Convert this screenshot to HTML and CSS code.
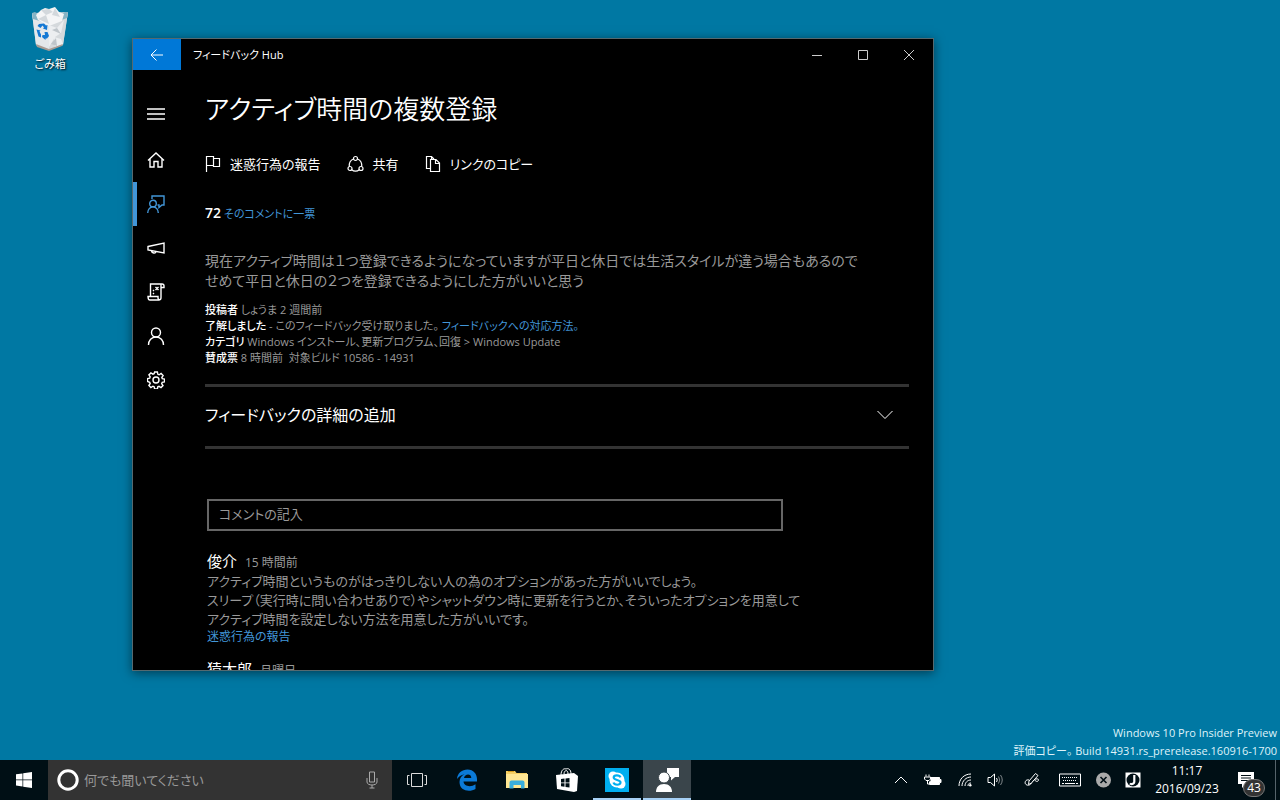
FILE: index.html
```
<!DOCTYPE html>
<html lang="ja">
<head>
    <meta charset="UTF-8">
    <meta name="viewport" content="width=device-width, initial-scale=1.0">
    <title>フィードバック Hub</title>
    <link rel="stylesheet" href="styles.css">
</head>
<body>

<div class="desktop">

    <!-- Desktop icon -->
    <button class="desktop-icon">
        <svg width="40" height="46" viewBox="0 0 40 46">
            <path d="M2 7l36-1-5 33-14 5-13-5z" fill="#c9d3d9"/>
            <path d="M2 7l17 5v32L6 39z" fill="#e4e7ea"/>
            <path d="M19 12l19-6-5 33-14 5z" fill="#d5d9dc"/>
            <path d="M2 7l3-1 6 5 8 2 10-3 6-4 3 0-1 6-17 6L3 13z" fill="#86b4c5"/>
            <path d="M6 9l5-5 4-2 4 1 6-2 4 5 5 2-2 7-13 5L8 14z" fill="#f4f5f6"/>
            <path d="M11 4l5 5 7-3-4-3zM25 2l-3 7 8 2zM8 13l8-4 3 9z" fill="#d3d8dc"/>
            <path d="M19 19l8 3 7-8-3 13-6 4-6 10zM24 31l7 2 2 5-8 3z" fill="#eceef0"/>
            <path d="M22 24l5-2 4 6zM21 38l5-6 1 8z" fill="#bfc5ca"/>
            <path d="M6 38l13 5 14-5-1 2-13 5-12-4z" fill="#a99b93"/>
            <path d="M9 18l5-.5 2 2 1.500-.5-.5 5-4-1.500 1-1-1.500-2-2 2.500-3-2zM6.500 23.500l4 1-1 1 1.500 3 0 3-2.500-1zM12.500 29l2.500 0-.500-3 3 0 1.500 4-2 2.500h-1.500v1.500l-3.500-3z" fill="#1478d4"/>
        </svg>
        <span>ごみ箱</span>
    </button>

    <!-- Feedback Hub window -->
    <div class="window">
        <header class="titlebar">
            <button class="back" aria-label="戻る">
                <svg width="14" height="12" viewBox="0 0 14 12"><path d="M13 6H1M6.500 .5L1 6l5.500 5.500"/></svg>
            </button>
            <span class="caption">フィードバック Hub</span>
            <button class="control" aria-label="最小化">
                <svg width="12" height="12" viewBox="0 0 12 12"><path d="M1 6.500h10"/></svg>
            </button>
            <button class="control" aria-label="最大化">
                <svg width="12" height="12" viewBox="0 0 12 12"><path d="M1.500 1.500h9v9h-9z"/></svg>
            </button>
            <button class="control" aria-label="閉じる">
                <svg width="12" height="12" viewBox="0 0 12 12"><path d="M1 1l10 10M11 1L1 11"/></svg>
            </button>
        </header>

        <div class="window-body">
            <nav class="sidebar">
                <button class="menu" aria-label="メニュー">
                    <svg width="18" height="18" viewBox="0 0 18 18"><path d="M0 4h18M0 9h18M0 14h18"/></svg>
                </button>
                <a href="#" aria-label="ホーム">
                    <svg width="18" height="18" viewBox="0 0 18 18"><path d="M1 9.500L9 2l8 7.500M3 8v8h4v-5.500h4V16h4V8"/></svg>
                </a>
                <a href="#" class="active" aria-label="フィードバック">
                    <svg width="18" height="18" viewBox="0 0 18 18"><path d="M5 4V1h12v9h-2l-3 2.500V10h-1.500"/><circle cx="6" cy="8.500" r="3.300"/><path d="M.7 18c0-3.500 2.300-6.200 5.300-6.200s5.300 2.700 5.300 6.200"/></svg>
                </a>
                <a href="#" aria-label="お知らせ">
                    <svg width="18" height="18" viewBox="0 0 18 18"><path d="M1 7.500L17 4v10L1 11zM4.500 12c.5 2.500 4 2.700 4.500.8"/></svg>
                </a>
                <a href="#" aria-label="クエスト">
                    <svg width="18" height="18" viewBox="0 0 18 18"><path d="M3.500 13.500V1H15q2 0 2 1.800v1.700h-3M14 1.500v13M14 14.500c0 3-3 3-3 0V13.500H1c0 2 .5 3.500 2 3.500h9.500"/><path d="M8.500 4l3 3M11.500 4l-3 3M6 11l1-1M6 8l1-1"/></svg>
                </a>
                <a href="#" aria-label="プロフィール">
                    <svg width="18" height="18" viewBox="0 0 18 18"><circle cx="9" cy="5.500" r="4.500"/><path d="M1.500 18c0-4.500 3-8 7.500-8s7.500 3.500 7.500 8"/></svg>
                </a>
                <a href="#" aria-label="設定">
                    <svg width="18" height="18" viewBox="0 0 18 18"><circle cx="9" cy="9" r="3"/><path d="M7.600 1h2.800l.5 2.300 1.200.5 2-1.300 2 2-1.300 2 .5 1.200 2.200.4v2.800l-2.300.5-.5 1.200 1.300 2-2 2-2-1.300-1.200.5-.4 2.200H7.600l-.5-2.300-1.200-.5-2 1.300-2-2 1.300-2-.5-1.200L.5 10.400V7.600l2.200-.5.5-1.200-1.300-2 2-2 2 1.300 1.200-.5z"/></svg>
                </a>
            </nav>

            <main class="content">
                <h1>アクティブ時間の複数登録</h1>

                <div class="commands">
                    <button>
                        <svg width="16" height="18" viewBox="0 0 16 18"><path d="M1.500 17V1.500h7v9h-7M8.500 3.500h6v8h-6v-1"/></svg>
                        迷惑行為の報告
                    </button>
                    <button>
                        <svg width="17" height="18" viewBox="0 0 17 18"><circle cx="8.500" cy="3.500" r="2"/><circle cx="3" cy="13.500" r="2"/><circle cx="14" cy="13.500" r="2"/><path d="M6.500 4C3.500 5 2 8 2.300 11.500M10.500 4c3 1 4.500 4 4.200 7.500M4.800 14.800c2 1.800 5.400 1.800 7.400 0"/></svg>
                        共有
                    </button>
                    <button>
                        <svg width="16" height="18" viewBox="0 0 16 18"><path d="M5 13.500H1.500v-12h5L9 4M5.500 4.500H11l3.500 3.500v8.500h-9zM10.500 4.500V8.500h4M6.500 1.500V4"/></svg>
                        リンクのコピー
                    </button>
                </div>

                <p class="votes"><strong>72</strong> <a href="#">そのコメントに一票</a></p>

                <p class="description">現在アクティブ時間は１つ登録できるようになっていますが平日と休日では生活スタイルが違う場合もあるので<br>せめて平日と休日の２つを登録できるようにした方がいいと思う</p>

                <div class="meta">
                    <p><b>投稿者</b> しょうま 2 週間前</p>
                    <p><b>了解しました</b> - このフィードバック受け取りました。 <a href="#">フィードバックへの対応方法。</a></p>
                    <p><b>カテゴリ</b> Windows インストール、更新プログラム、回復 &gt; Windows Update</p>
                    <p><b>賛成票</b> 8 時間前&nbsp; 対象ビルド 10586 - 14931</p>
                </div>

                <button class="expander">
                    フィードバックの詳細の追加
                    <svg width="16" height="10" viewBox="0 0 16 10"><path d="M.5 1L8 8.500 15.500 1"/></svg>
                </button>

                <!-- Comments -->
                <section class="comments">
                    <input type="text" placeholder="コメントの記入" aria-label="コメントの記入">

                    <article class="comment">
                        <h2>俊介 <small>15 時間前</small></h2>
                        <p>アクティブ時間というものがはっきりしない人の為のオプションがあった方がいいでしょう。<br>スリープ（実行時に問い合わせありで）やシャットダウン時に更新を行うとか、そういったオプションを用意して<br>アクティブ時間を設定しない方法を用意した方がいいです。</p>
                        <a href="#">迷惑行為の報告</a>
                    </article>

                    <article class="comment">
                        <h2>猿太郎 <small>月曜日</small></h2>
                    </article>
                </section>
            </main>
        </div>
    </div>

    <div class="watermark">Windows 10 Pro Insider Preview<br>評価コピー。 Build 14931.rs_prerelease.160916-1700</div>
</div>

<!-- Taskbar -->
<footer class="taskbar">
    <button class="start" aria-label="スタート">
        <svg width="16" height="16" viewBox="0 0 16 16"><path d="M0 2.300L6.500 1.400v6.200H0zM7.200 1.300L16 0v7.600H7.200zM0 8.300h6.500v6.200L0 13.600zM7.200 8.300H16V16l-8.800-1.300z" fill="#fff"/></svg>
    </button>

    <div class="search">
        <svg width="24" height="24" viewBox="0 0 24 24"><circle cx="12" cy="12" r="9.200" stroke="#fff" stroke-width="3" fill="none"/></svg>
        <input type="text" placeholder="何でも聞いてください" aria-label="検索">
        <svg width="12" height="18" viewBox="0 0 12 18"><path d="M3.500 1h5v10h-5zM1 7v4c0 4 10 4 10 0V7M6 14v3M3.500 17h5" stroke="#aaa" fill="none"/></svg>
    </div>

    <div class="apps">
        <button aria-label="タスク ビュー">
            <svg width="22" height="16" viewBox="0 0 22 16"><path d="M5.500 1.500h11v13h-11zM3.500 3.500h-2v9h2M18.500 3.500h2v9h-2" stroke="#ddd" fill="none"/></svg>
        </button>
        <button aria-label="Edge">
            <svg width="22" height="22" viewBox="0 0 22 22"><path d="M1 10C1.500 4 6 .5 11.500 .5 17.500 .5 21 5 21 10v2.500H7.500c.3 5 7.500 6 12 2.800v4.700c-6 3.500-16 2-16-7 0-3.500 2-6.500 5-7.800C5 6 2.500 7.800 1 10zm7-1h7.300c0-5-6.600-4.500-7.300 0z" fill="#0b7ad8"/></svg>
        </button>
        <button aria-label="エクスプローラー">
            <svg width="22" height="20" viewBox="0 0 22 20"><path d="M0 1h9l1.500 2H21v15H0z" fill="#f5cf63"/><path d="M2 1.500h6" stroke="#d89e1c"/><path d="M0 4h22v14H0z" fill="#ffe793"/><path d="M3.500 18.500v-6q0-2 2-2h11q2 0 2 2v6H15V15H7.500v3.500z" fill="#3aaedc"/></svg>
        </button>
        <button aria-label="ストア">
            <svg width="22" height="24" viewBox="0 0 22 24"><path d="M5 7C5 2 8 0 10 1c2-1 5 0 5 5M8 6c0-4 4-5 4 0" stroke="#fff" fill="none"/><path d="M0 7l18-2 4 3-1 15-3 1L1 21z" fill="#fff"/><path d="M5 11l3.500-.4v3.800H5zM9.500 10.500l4-.5v4.400h-4zM5 15.300h3.500v3.500L5 18.300zM9.500 15.300h4v4.300l-4-.6z" fill="#000f15"/></svg>
        </button>
        <button class="running" aria-label="Skype">
            <svg width="24" height="24" viewBox="0 0 24 24"><path d="M0 0h24v24H0z" fill="#00aff0"/><circle cx="12" cy="12" r="7.500" fill="#fff"/><circle cx="8" cy="8" r="4.500" fill="#fff"/><circle cx="16" cy="16" r="4.500" fill="#fff"/><path d="M15.500 9.300C14.500 6.800 8.800 6.700 8.700 9.600c0 3 6.800 1.800 6.800 4.800 0 3.200-6.200 3-7 .1" stroke="#00aff0" stroke-width="2.200" fill="none"/></svg>
        </button>
        <button class="running current" aria-label="フィードバック Hub">
            <svg width="24" height="26" viewBox="0 0 24 26"><path d="M12 1h12v9h-4l-4 3.500V10h-4z" fill="#fff"/><circle cx="9" cy="10.500" r="5.500" fill="#fff" stroke="#3a454b"/><path d="M1 25c0-5 3-8 8-8s8 3 8 8z" fill="#fff"/></svg>
        </button>
    </div>

    <div class="tray">
        <button class="narrow" aria-label="隠れているインジケーターを表示します">
            <svg width="14" height="8" viewBox="0 0 14 8"><path d="M1 7l6-6 6 6"/></svg>
        </button>
        <button class="wide" aria-label="電源">
            <svg width="18" height="14" viewBox="0 0 18 14"><path d="M7 4.500h8.500v2H17v3h-1.500v2H5.500V9L7 7.500z" fill="#fff"/><path d="M2 1.500v2M5 1.500v2M.5 4h6v2l-1.500 1.500h-3L.5 6zM3.500 8v3H5"/></svg>
        </button>
        <button class="narrow" aria-label="ネットワーク">
            <svg width="14" height="14" viewBox="0 0 14 14"><path d="M1 13C1 6 6 1 13 1M4 13c0-5 4-9 9-9M7 13c0-3.500 2.500-6 6-6M10 13c0-2 1-3 3-3"/><circle cx="12.300" cy="12.300" r="1.200" fill="#fff" stroke="none"/></svg>
        </button>
        <button aria-label="音量">
            <svg width="16" height="14" viewBox="0 0 16 14"><path d="M1 4.500h2.500L7.500 1v12L3.500 9.500H1zM9.500 5q1.500 2 0 4"/><path d="M11.500 3.500q2.500 3.500 0 7M13.500 2q3.500 5 0 10" opacity=".5"/></svg>
        </button>
        <button class="pen" aria-label="Windows Ink">
            <svg width="16" height="16" viewBox="0 0 16 16"><path d="M5 9l6.500-7.500 2.500 2L7.500 11l-3 1.500zM5 8C1.500 7 0 11 2 12.500c2 1.500 4.500.5 5.500-1.500M8.500 9.500c2-3 6-3.500 6-1.500 0 1.800-3 2-3.500 0"/></svg>
        </button>
        <button class="keyboard" aria-label="タッチ キーボード">
            <svg width="22" height="14" viewBox="0 0 22 14"><path d="M.5 1h21v12H.5z"/><path d="M3 4.500h16M4 7.500h14" stroke-dasharray="1 1"/><path d="M3 10.500h2M6 10.500h10M17 10.500h2"/></svg>
        </button>
        <button aria-label="入力モード">
            <svg width="15" height="16" viewBox="0 0 15 16"><circle cx="7.500" cy="8" r="7.500" fill="#aaa" stroke="none"/><path d="M4.500 5l6 6M10.500 5l-6 6" stroke="#000f15" stroke-width="1.600"/></svg>
        </button>
        <button class="narrow" aria-label="IME">
            <svg width="16" height="16" viewBox="0 0 16 16"><path d="M.5 .5h15v15H.5z" fill="#fff" stroke="none"/><circle cx="8" cy="8" r="6.500" fill="#000f15" stroke="none"/><path d="M9.300 3v6.500c0 3-3.500 2.800-4.500 2" stroke-width="2.200"/></svg>
        </button>
        <button class="clock">11:17<br>2016/09/23</button>
        <button class="notifications" aria-label="通知 43 件">
            <svg width="16" height="16" viewBox="0 0 16 16"><path d="M0 0h16v12H8l-4 4v-4H0z" fill="#fff" stroke="none"/><path d="M3 3.500h10M3 6h10M3 8.500h7" stroke="#000f15"/></svg>
            <span class="badge">43</span>
        </button>
    </div>
</footer>

</body>
</html>
```
FILE: styles.css
```
/* Desktop shell */
* {
    box-sizing: border-box;
}
body {
    font-family: "Open Sans", "Noto Sans CJK JP", sans-serif;
    font-feature-settings: "palt";
    font-size: 12px;
    line-height: 16px;
    margin: 0;
    height: 100vh;
    display: flex;
    flex-direction: column;
    overflow: hidden;
    color: #fff;
    background-color: #0078a3;
}
h1, h2, p {
    margin: 0;
    font-weight: normal;
}
button, input {
    font: inherit;
    font-feature-settings: inherit;
    color: inherit;
    background: none;
    border: none;
    padding: 0;
}
a {
    color: #4296d8;
    text-decoration: none;
}
svg {
    display: block;
    flex: none;
}
.desktop {
    position: relative;
    flex: 1;
    min-height: 0;
}
.desktop-icon {
    display: flex;
    flex-direction: column;
    align-items: center;
    gap: 4px;
    width: 100px;
    padding-top: 6px;
    font-size: 11px;
    text-shadow: 1px 1px 2px #000;
}
.watermark {
    position: absolute;
    right: 3px;
    bottom: 0;
    font-size: 11px;
    line-height: 18px;
    text-align: right;
    color: #dff3fa;
}

/* App window */
.window {
    position: absolute;
    top: 38px;
    right: 346px;
    bottom: 89px;
    left: 132px;
    display: flex;
    flex-direction: column;
    border: 1px solid #55696f;
    background-color: #000;
    box-shadow: 0 2px 10px rgba(0, 0, 0, 0.5);
}
.titlebar {
    display: flex;
    flex: none;
    height: 31px;
    padding-right: 1px;
}
.titlebar svg, .sidebar svg, .commands svg, .expander svg {
    fill: none;
    stroke: currentColor;
}
.titlebar button {
    display: flex;
    align-items: center;
    justify-content: center;
}
.back {
    width: 48px;
}
.titlebar .back {
    background-color: #0078d7;
}
.caption {
    flex: 1;
    padding-left: 12px;
    font-size: 11px;
    line-height: 31px;
}
.control {
    width: 46px;
    color: #ccc;
}
.window-body {
    display: flex;
    flex: 1;
    min-height: 0;
}
.sidebar {
    flex: none;
    width: 48px;
    padding-top: 20px;
}
.sidebar a, .menu {
    display: flex;
    align-items: center;
    justify-content: center;
    width: 48px;
    height: 44px;
    padding-right: 2px;
    color: #fff;
}
.menu {
    height: 48px;
}
.sidebar svg {
    stroke-width: 1.4;
}
.sidebar .active {
    color: #4296d8;
    border-left: 4px solid #4296d8;
    padding-right: 6px;
}

/* Feedback details */
.content {
    flex: 1;
    min-width: 0;
    padding: 21px 24px 0;
    overflow: hidden;
    color: #999;
}
h1 {
    font-size: 26px;
    font-weight: 350;
    line-height: 36px;
    color: #fff;
}
.commands {
    display: flex;
    gap: 26px;
    margin-top: 27px;
    font-size: 13px;
    line-height: 20px;
    color: #fff;
}
.commands button {
    display: flex;
    align-items: center;
    gap: 9px;
}
.commands svg {
    stroke-width: 1.2;
}
.votes {
    margin-top: 29px;
    font-size: 11px;
    line-height: 20px;
}
.votes strong {
    font-size: 14px;
    font-weight: 600;
    color: #fff;
}
.description {
    margin-top: 27px;
    font-size: 14px;
    line-height: 20px;
    white-space: nowrap;
}
.meta {
    margin-top: 11px;
    font-size: 11px;
    white-space: nowrap;
}
.meta b {
    font-weight: 500;
    color: #fff;
}
.expander {
    display: flex;
    align-items: center;
    justify-content: space-between;
    width: 100%;
    height: 65px;
    margin-top: 18px;
    padding: 0 16px 3px 0;
    border-top: 3px solid #333;
    border-bottom: 3px solid #333;
    font-size: 16px;
    color: #fff;
}

/* Comments */
.comments {
    padding: 50px 126px 0 2px;
}
.comments input {
    display: block;
    width: 100%;
    height: 32px;
    margin-bottom: 21px;
    padding: 0 10px 2px;
    border: 2px solid #666;
    font-size: 13px;
}
input::placeholder {
    color: #999;
    opacity: 1;
}
.comment {
    margin-bottom: 15px;
    white-space: nowrap;
}
.comment h2 {
    font-size: 15px;
    line-height: 19px;
    color: #fff;
}
.comment small {
    margin-left: 4px;
    font-size: 12px;
    color: #999;
}
.comment p {
    font-size: 13px;
    line-height: 19px;
}
.comment a {
    display: block;
}

/* Taskbar */
.taskbar {
    display: flex;
    flex: none;
    height: 40px;
    background-color: #000f15;
}
.start, .apps button {
    display: flex;
    align-items: center;
    justify-content: center;
    width: 48px;
}
.search {
    display: flex;
    align-items: center;
    width: 344px;
    padding: 0 14px 0 8px;
    background-color: #333;
}
.search input {
    flex: 1;
    min-width: 0;
    padding-left: 4px;
    font-size: 13px;
}
.apps {
    display: flex;
    gap: 2px;
    padding-left: 1px;
}
.apps .running {
    border-top: 2px solid transparent;
    border-bottom: 2px solid #a6d0f5;
}
.apps .current {
    background-color: #3a454b;
}
.tray {
    display: flex;
    align-items: center;
    margin-left: auto;
    margin-right: 4px;
    border-right: 1px solid #56636a;
}
.tray button {
    display: flex;
    align-items: center;
    justify-content: center;
    width: 32px;
    height: 40px;
}
.tray svg {
    fill: none;
    stroke: #fff;
}
.tray .narrow {
    width: 28px;
}
.tray .wide {
    width: 36px;
}
.tray .pen {
    width: 42px;
}
.tray .keyboard {
    width: 34px;
}
.tray .clock {
    display: block;
    width: 80px;
    line-height: 18px;
    text-align: center;
}
.tray .notifications {
    position: relative;
    width: 48px;
    padding-right: 10px;
}
.badge {
    position: absolute;
    right: 10px;
    bottom: 3px;
    width: 22px;
    border: 1px solid #777;
    border-radius: 9px;
    background-color: #333;
    text-align: center;
}
```
